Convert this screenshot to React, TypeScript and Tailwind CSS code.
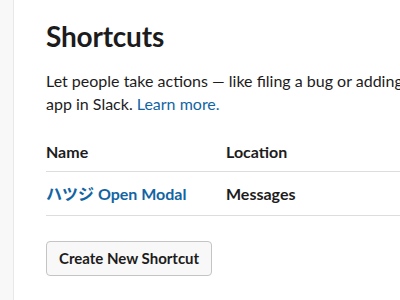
export default function App() {
  return (
    <div className="flex w-[400px] h-[300px] overflow-hidden bg-white text-[#1d1c1d]" style={{ fontFamily: 'Lato, "Noto Sans CJK JP", sans-serif' }}>
      <div className="w-[14px] shrink-0 bg-[#f8f8f8] border-r border-[#e8e8e8]" />
      <div className="shrink-0 w-[600px] pl-[32px] pt-[19px]">
        <h1 className="text-[28px] font-bold leading-[34px] tracking-[-0.2px]">Shortcuts</h1>
        <p className="mt-[16px] text-[16px] leading-[23px] whitespace-nowrap">
          Let people take actions — like filing a bug or adding a task — from your
          <br />
          app in Slack. <span className="text-[#1264a3]">Learn more.</span>
        </p>
        <div className="mt-[18px] w-[554px]">
          <div className="flex h-[39px] items-center border-b border-[#dddddd] text-[16px] font-bold">
            <div className="w-[180px]">Name</div>
            <div>Location</div>
          </div>
          <div className="flex h-[44px] items-center border-b border-[#dddddd] text-[16px] font-bold">
            <div className="w-[180px] text-[#1264a3]">ハツジ Open Modal</div>
            <div>Messages</div>
          </div>
        </div>
        <button className="mt-[25px] h-[35px] px-[12px] rounded-[4px] border border-[#c4c4c4] bg-[#f8f8f8] text-[15px] font-bold">
          Create New Shortcut
        </button>
      </div>
    </div>
  )
}
